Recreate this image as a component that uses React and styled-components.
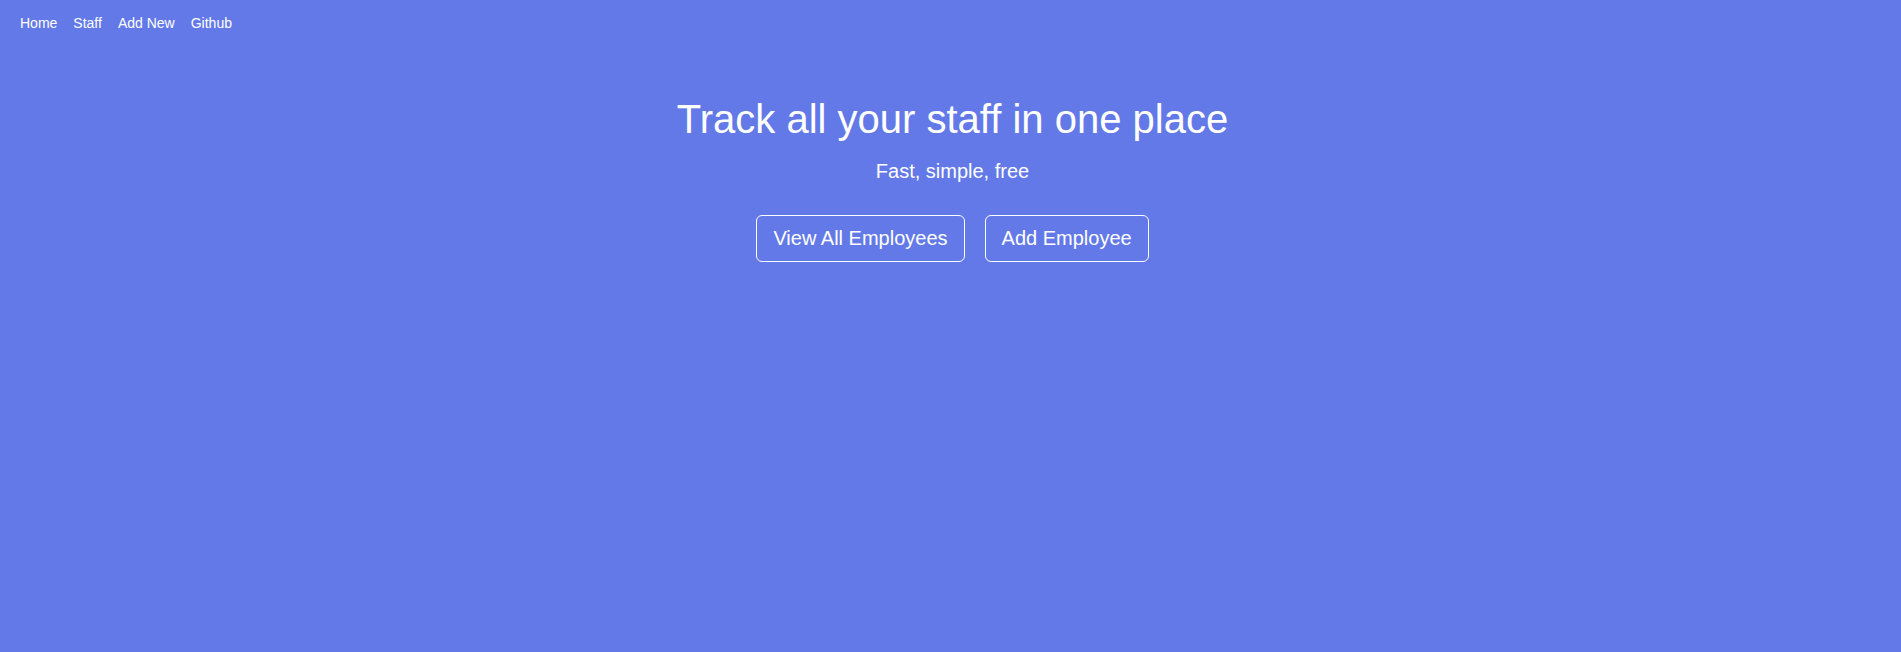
import React from "react";
import styled, { createGlobalStyle } from "styled-components";

const GlobalStyle = createGlobalStyle`
    html, body {
        margin: 0;
        padding: 0;
        background-color: #6379e8;
        font-family: "Liberation Sans", Arial, sans-serif;
        color: #fff;
    }
`;

// Barra de navegação
const Nav = styled.nav`
    display: flex;
    gap: 16px;
    padding: 15px 20px;
`;

const NavLink = styled.a`
    color: #fff;
    font-size: 14px;
    text-decoration: none;
    cursor: pointer;
`;

// Seção principal
const Hero = styled.section`
    display: flex;
    flex-direction: column;
    align-items: center;
    padding: 51px 0 0 4px;
`;

const Title = styled.h1`
    margin: 0;
    font-size: 40px;
    font-weight: 400;
`;

const Subtitle = styled.p`
    margin: 18px 0 0;
    font-size: 20px;
`;

const Actions = styled.div`
    display: flex;
    gap: 20px;
    margin-top: 32px;
`;

const Button = styled.button`
    background: transparent;
    color: #fff;
    border: 1px solid #fff;
    border-radius: 6px;
    padding: 11px 16px;
    font-family: inherit;
    font-size: 20px;
    cursor: pointer;
`;

const App = () => {
    return (
        <>
            <GlobalStyle />
            <Nav>
                <NavLink>Home</NavLink>
                <NavLink>Staff</NavLink>
                <NavLink>Add New</NavLink>
                <NavLink>Github</NavLink>
            </Nav>
            <Hero>
                <Title>Track all your staff in one place</Title>
                <Subtitle>Fast, simple, free</Subtitle>
                <Actions>
                    <Button>View All Employees</Button>
                    <Button>Add Employee</Button>
                </Actions>
            </Hero>
        </>
    );
};

export default App;
